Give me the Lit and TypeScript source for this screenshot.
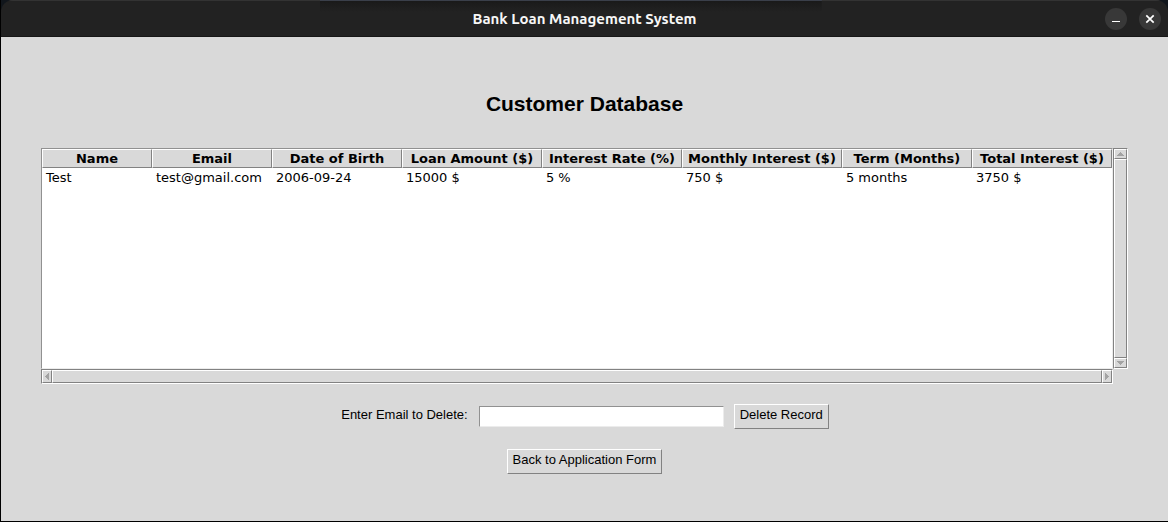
import { LitElement, html, css, svg } from "lit";
import { customElement, property } from "lit/decorators.js";

const columns = [
  { label: "Name", width: 110 },
  { label: "Email", width: 120 },
  { label: "Date of Birth", width: 130 },
  { label: "Loan Amount ($)", width: 140 },
  { label: "Interest Rate (%)", width: 140 },
  { label: "Monthly Interest ($)", width: 160 },
  { label: "Term (Months)", width: 130 },
  { label: "Total Interest ($)", width: 140 },
];
const total = columns.reduce((sum, c) => sum + c.width, 0);

const records = [
  ["Test", "test@gmail.com", "2006-09-24", "15000 $", "5 %", "750 $", "5 months", "3750 $"],
];

const arrows = {
  up: svg`<path d="M3 0h1v1h1v1h1v1h1v1H0V3h1V2h1V1h1z"/>`,
  down: svg`<path d="M0 0h7v1H6v1H5v1H4v1H3V3H2V2H1V1H0z"/>`,
  left: svg`<path d="M4 0v7H3V6H2V5H1V4H0V3h1V2h1V1h1V0z"/>`,
  right: svg`<path d="M0 0h1v1h1v1h1v1h1v1H3v1H2v1H1v1H0z"/>`,
};

@customElement("scroll-bar")
class ScrollBar extends LitElement {
  @property({ reflect: true }) direction: "vertical" | "horizontal" = "vertical";

  static styles = css`
    :host {
      display: flex;
      box-sizing: border-box;
      border: 1px solid;
      border-color: #828282 #fff #fff #828282;
      background: #c3c3c3;
    }
    :host([direction="vertical"]) { flex-direction: column; width: 15px; }
    :host([direction="horizontal"]) { height: 15px; }
    .arrow, .thumb {
      box-sizing: border-box;
      background: #d9d9d9;
      border: 1px solid;
      border-color: #fff #828282 #828282 #fff;
    }
    .arrow {
      display: flex;
      align-items: center;
      justify-content: center;
      flex: 0 0 10px;
      padding: 0;
      border-radius: 0;
    }
    .thumb { flex: 1; }
    svg { display: block; fill: #a3a3a3; }
  `;

  private arrow(name: keyof typeof arrows) {
    const upright = name === "up" || name === "down";
    return html`<button class="arrow" aria-label="Scroll ${name}">
      <svg width=${upright ? 7 : 4} height=${upright ? 4 : 7} shape-rendering="crispEdges">${arrows[name]}</svg>
    </button>`;
  }

  render() {
    const vertical = this.direction === "vertical";
    return html`${this.arrow(vertical ? "up" : "left")}
      <div class="thumb"></div>
      ${this.arrow(vertical ? "down" : "right")}`;
  }
}

@customElement("app-root")
class AppRoot extends LitElement {
  static styles = css`
    :host {
      display: flex;
      flex-direction: column;
      box-sizing: border-box;
      min-height: 100vh;
      border-left: 1px solid #000;
      border-bottom: 1px solid #000;
      background: #d9d9d9;
      color: #000;
      font: 13px/15px "Liberation Sans", Arial, sans-serif;
    }
    .backdrop { background: #11161c; }
    .titlebar {
      display: grid;
      grid-template-columns: 1fr auto 1fr;
      align-items: center;
      box-sizing: border-box;
      height: 37px;
      padding: 1px 7px 0;
      border-bottom: 1px solid #171717;
      border-radius: 12px 12px 0 0;
      background:
        linear-gradient(#3a3f4a, #3a3f4a) 48% 0 / 43% 1px no-repeat,
        linear-gradient(#333, #333) 0 0 / 100% 1px no-repeat,
        linear-gradient(#191919, #222) 48% 0 / 43% 12px no-repeat,
        #222;
    }
    .title {
      grid-column: 2;
      color: #f7f7f7;
      font: bold 15px/18px Ubuntu, "Noto Sans", sans-serif;
    }
    .controls { display: flex; gap: 12px; justify-content: flex-end; }
    .control {
      display: block;
      width: 22px;
      height: 22px;
      padding: 0;
      border: 0;
      border-radius: 50%;
      background: #383838;
    }
    .control svg { display: block; fill: none; stroke: #fff; }
    .content {
      display: flex;
      flex-direction: column;
      align-items: center;
      padding: 54px 40px 40px;
    }
    h1 { margin: 0 0 32px; font-size: 21px; line-height: 25px; }
    .grid {
      display: grid;
      grid-template-columns: 1fr auto;
      width: 100%;
    }
    .tree {
      box-sizing: border-box;
      height: 221px;
      border: 1px solid;
      border-color: #919191 #ececec #ececec #919191;
      background: #fff;
      overflow: hidden;
    }
    table {
      width: 100%;
      table-layout: fixed;
      border-collapse: separate;
      border-spacing: 0;
      font: 13px/17px "DejaVu Sans", sans-serif;
    }
    th, td { white-space: nowrap; }
    th {
      padding: 0;
      border: 1px solid;
      border-color: #fff #828282 #828282 #fff;
      background: #d9d9d9;
      font-weight: bold;
    }
    td { padding: 1px 4px; }
    .form {
      display: flex;
      align-items: center;
      gap: 10px;
      margin: 20px 0;
    }
    .field {
      box-sizing: border-box;
      width: 245px;
      height: 21px;
      padding: 1px 2px;
      border: 1px solid;
      border-color: #919191 #ececec #ececec #919191;
      border-radius: 0;
      background: #fff;
      font: inherit;
    }
    label { padding: 0 1px 4px; }
    .button {
      height: 25px;
      padding: 0 5px 4px;
      border: 1px solid;
      border-color: #fff #828282 #828282 #fff;
      border-radius: 0;
      background: #d9d9d9;
      color: #000;
      font: inherit;
    }
  `;

  render() {
    return html`
      <div class="backdrop">
        <header class="titlebar">
          <div class="title">Bank Loan Management System</div>
          <div class="controls">
            <button class="control" aria-label="Minimize">
              <svg width="22" height="22"><path d="M7 13.5h8" /></svg>
            </button>
            <button class="control" aria-label="Close">
              <svg width="22" height="22"><path stroke-width="1.7" d="M7.3 7.3l7.4 7.4M14.7 7.3l-7.4 7.4" /></svg>
            </button>
          </div>
        </header>
      </div>
      <main class="content">
        <h1>Customer Database</h1>
        <div class="grid">
          <div class="tree">
            <table>
              <colgroup>
                ${columns.map((c) => html`<col style="width:${(c.width / total) * 100}%" />`)}
              </colgroup>
              <thead>
                <tr>${columns.map((c) => html`<th scope="col">${c.label}</th>`)}</tr>
              </thead>
              <tbody>
                ${records.map((r) => html`<tr>${r.map((v) => html`<td>${v}</td>`)}</tr>`)}
              </tbody>
            </table>
          </div>
          <scroll-bar direction="vertical"></scroll-bar>
          <scroll-bar direction="horizontal"></scroll-bar>
        </div>
        <div class="form">
          <label for="email">Enter Email to Delete:</label>
          <input class="field" id="email" type="text" />
          <button class="button">Delete Record</button>
        </div>
        <button class="button">Back to Application Form</button>
      </main>
    `;
  }
}
